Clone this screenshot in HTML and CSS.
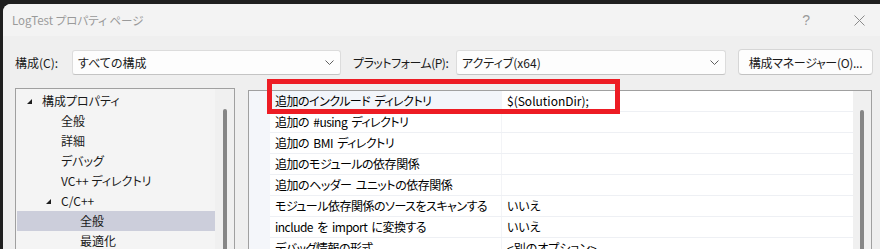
FILE: index.html
```html
<!DOCTYPE html>
<html lang="ja">
	<head>
		<title>LogTest プロパティ ページ</title>
		<meta charset="utf-8"/>
		<link rel="stylesheet" href="styles.css">
	</head>
	<body>
		<div class="dialog">

			<div class="titlebar">
				<span class="title">LogTest プロパティ ページ</span>
				<span class="help">?</span>
				<span class="close">
					<svg width="11" height="11" viewBox="0 0 11 11"><path d="M0.5 0.5 L10.5 10.5 M10.5 0.5 L0.5 10.5" stroke="#8a8a8a" stroke-width="1" fill="none"/></svg>
				</span>
			</div>

			<div class="toolbar">
				<span class="label label-config">構成(C):</span>
				<div class="combo combo-config">
					<span>すべての構成</span>
					<svg class="chevron" width="9" height="5" viewBox="0 0 9 5"><path d="M0.5 0.5 L4.5 4.5 L8.5 0.5" stroke="#5f5f5f" fill="none"/></svg>
				</div>
				<span class="label label-platform">プラットフォーム(P):</span>
				<div class="combo combo-platform">
					<span>アクティブ(x64)</span>
					<svg class="chevron" width="9" height="5" viewBox="0 0 9 5"><path d="M0.5 0.5 L4.5 4.5 L8.5 0.5" stroke="#5f5f5f" fill="none"/></svg>
				</div>
				<button class="btn">構成マネージャー(O)...</button>
			</div>

			<div class="content">

				<div class="tree">
					<ul class="tree-list">
						<li class="node lv0"><span class="twisty"><svg width="5" height="5" viewBox="0 0 5 5"><polygon points="5,0 5,5 0,5" fill="#1e1e1e"/></svg></span>構成プロパティ</li>
						<li class="node lv1">全般</li>
						<li class="node lv1">詳細</li>
						<li class="node lv1">デバッグ</li>
						<li class="node lv1">VC++ ディレクトリ</li>
						<li class="node lv1b"><span class="twisty"><svg width="5" height="5" viewBox="0 0 5 5"><polygon points="5,0 5,5 0,5" fill="#1e1e1e"/></svg></span>C/C++</li>
						<li class="node lv2 selected">全般</li>
						<li class="node lv2">最適化</li>
						<li class="node lv2">プリプロセッサ</li>
					</ul>
					<div class="vscroll tree-scroll"><div class="thumb"></div></div>
				</div>

				<div class="grid">
					<div class="gutter"></div>
					<div class="rows">
						<div class="row"><div class="name current">追加のインクルード&nbsp;ディレクトリ</div><div class="value">$(SolutionDir);</div></div>
						<div class="row"><div class="name">追加の #using ディレクトリ</div><div class="value"></div></div>
						<div class="row"><div class="name">追加の BMI ディレクトリ</div><div class="value"></div></div>
						<div class="row"><div class="name">追加のモジュールの依存関係</div><div class="value"></div></div>
						<div class="row"><div class="name">追加のヘッダー ユニットの依存関係</div><div class="value"></div></div>
						<div class="row"><div class="name">モジュール依存関係のソースをスキャンする</div><div class="value">いいえ</div></div>
						<div class="row"><div class="name">include を import に変換する</div><div class="value">いいえ</div></div>
						<div class="row"><div class="name">デバッグ情報の形式</div><div class="value">&lt;別のオプション&gt;</div></div>
					</div>
					<div class="vscroll grid-scroll"><div class="thumb"></div></div>
					<div class="highlight"></div>
				</div>

			</div>
		</div>
	</body>
</html>
```

FILE: styles.css
```css
body, html {
	margin: 0px;
	height: 100%;
	overflow: hidden;
	background-color: #1f1f1f;
	font-family: "Noto Sans CJK JP", sans-serif;
	font-size: 12px;
	color: #1a1a1a;
}

.dialog {
	margin: 4px 0 0 3px;
	height: 245px;
	background-color: #efefef;
	border-radius: 8px 0 0 0;
	overflow: hidden;
}

/* ---------- title bar ---------- */
.titlebar {
	height: 32px;
	display: flex;
	align-items: center;
	padding-left: 9px;
	background-color: #f3f3f3;
	color: #9a9a9a;
}
.title {
	flex: 1;
	font-size: 11.5px;
	font-feature-settings: "palt";
}
.help {
	font-family: "Liberation Sans", sans-serif;
	font-size: 14px;
	color: #9a9a9a;
	margin-right: 44px;
}
.close {
	display: flex;
	margin-right: 15px;
}

/* ---------- toolbar ---------- */
.toolbar {
	display: flex;
	align-items: center;
	padding: 13px 0 0 12px;
	height: 27px;
}
.label {
	font-feature-settings: "palt";
}
.label-config {
	width: 57px;
}
.label-platform {
	width: 103px;
	margin-left: 12px;
	letter-spacing: -0.5px;
}
.combo {
	box-sizing: border-box;
	height: 25px;
	display: flex;
	align-items: center;
	justify-content: space-between;
	padding: 0 6px 0 5px;
	background-color: #fdfdfd;
	border: 1px solid #dcdcdc;
	border-bottom-color: #c4c4c4;
	border-radius: 3px;
	font-feature-settings: "palt";
}
.combo-config {
	width: 269px;
}
.combo-platform {
	width: 270px;
}
.btn {
	box-sizing: border-box;
	width: 135px;
	height: 26px;
	margin: -1px 0 0 12px;
	padding: 0;
	background-color: #fdfdfd;
	border: 1px solid #d6d6d6;
	border-bottom-color: #c2c2c2;
	border-radius: 4px;
	font-family: inherit;
	font-size: 12px;
	color: #1a1a1a;
	letter-spacing: -0.3px;
	font-feature-settings: "palt";
}

/* ---------- content ---------- */
.content {
	display: flex;
	align-items: flex-start;
	padding: 12px 0 0 12px;
	gap: 13px;
}

.tree {
	box-sizing: border-box;
	width: 220px;
	height: 200px;
	display: flex;
	background-color: #f4f4f4;
	border: 1px solid #a0a0a0;
}
.tree-list {
	list-style: none;
	margin: 0;
	padding: 2px 0 0 1px;
	flex: 1;
	font-feature-settings: "palt";
}
.node {
	height: 20px;
	line-height: 20px;
	display: flex;
	align-items: center;
	white-space: nowrap;
}
.twisty {
	width: 15px;
	display: flex;
	align-items: center;
	padding-top: 1px;
}
.lv0 { padding-left: 10px; }
.lv1 { padding-left: 44px; }
.lv1b { padding-left: 29px; }
.lv2 { padding-left: 63px; }
.selected {
	background-color: #cccedb;
}

.vscroll {
	background-color: #f0f0f0;
}
.thumb {
	width: 4px;
	height: 200px;
	background-color: #868686;
	border-radius: 2px;
}
.tree-scroll {
	width: 19px;
	padding: 20px 0 0 8px;
	box-sizing: border-box;
}

.grid {
	position: relative;
	box-sizing: border-box;
	width: 624px;
	height: 200px;
	margin-top: 2px;
	display: flex;
	background-color: #ffffff;
	border: 1px solid #a0a0a0;
}
.gutter {
	width: 21px;
	background-color: #f4f6fa;
}
.rows {
	flex: 1;
	color: #000000;
}
.row {
	display: grid;
	grid-template-columns: 232px 1fr;
	height: 21px;
	box-sizing: border-box;
	border-bottom: 1px solid #eef0f4;
	line-height: 20px;
	white-space: nowrap;
	font-feature-settings: "palt";
}
.name {
	padding-left: 5px;
	border-right: 1px solid #f3f4f7;
	letter-spacing: -0.5px;
	word-spacing: 2px;
}
.name.current {
	background-color: #f2f5fa;
}
.value {
	padding-left: 5px;
}
.grid-scroll {
	width: 18px;
	padding: 19px 0 0 7px;
	box-sizing: border-box;
}

/* red annotation frame */
.highlight {
	position: absolute;
	left: 18px;
	top: -12px;
	width: 353px;
	height: 35px;
	box-sizing: border-box;
	border: 5px solid #ed1c24;
}
```
